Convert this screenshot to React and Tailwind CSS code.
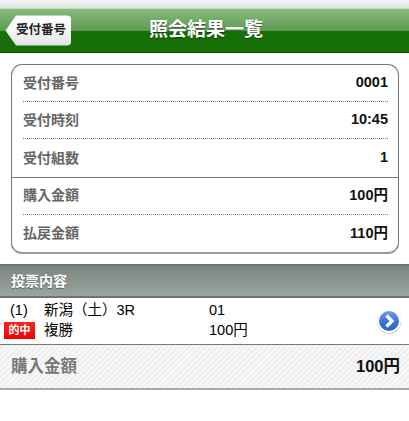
import React from 'react';

const font = { fontFamily: '"Liberation Sans", "Noto Sans CJK JP", sans-serif' };

const Row = ({ label, value, line }) => (
  <div className={`flex items-center justify-between h-[37.5px] ml-[11px] mr-[10px] ${line === 'dotted' ? 'border-b border-dotted border-[#777]' : ''}`}>
    <span className="text-[14px] font-bold text-[#666]">{label}</span>
    <span className="text-[14.5px] font-bold text-[#111]">{value}</span>
  </div>
);

const App = () => {
  return (
    <div className="w-[409px] h-[421px] bg-white overflow-hidden" style={font}>
      {/* Top strip */}
      <div className="h-[8px] bg-gradient-to-b from-[#f4f4f4] to-[#e2e2e2]" />

      {/* Header */}
      <div className="h-[45px] flex items-center border-t border-[#c4e0bc] border-b border-b-[#0f4f05] bg-[linear-gradient(#86bb7c_0%,#5f9a54_50%,#176f08_52%,#176f08_100%)] relative">
        <div className="ml-[5px] relative flex items-center h-[31px] w-[66px] pl-[11px]">
          <svg className="absolute left-0 top-0" width="66" height="31" viewBox="0 0 66 31">
            <defs>
              <linearGradient id="backBtn" x1="0" y1="0" x2="0" y2="1">
                <stop offset="0" stopColor="#ffffff" />
                <stop offset="0.5" stopColor="#f7f7f7" />
                <stop offset="1" stopColor="#dfe3e8" />
              </linearGradient>
            </defs>
            <path d="M0.5 15.5 L11 0.5 H62 Q66 0.5 66 4 V27 Q66 30.5 62 30.5 H11 Z" fill="url(#backBtn)" />
          </svg>
          <span className="relative text-[12.5px] font-bold text-[#222] whitespace-nowrap">受付番号</span>
        </div>
        <h1 className="ml-[78px] text-[19px] font-bold text-white [text-shadow:0_1px_1px_rgba(0,0,0,0.5)]">照会結果一覧</h1>
      </div>

      {/* Summary card */}
      <div className="mt-[11px] ml-[11px] mr-[10px] h-[190px] border border-[#777] border-b-2 border-b-[#999] rounded-[11px] flex flex-col">
        <Row label="受付番号" value="0001" line="dotted" />
        <Row label="受付時刻" value="10:45" line="dotted" />
        <div className="border-b border-[#777]">
          <Row label="受付組数" value="1" />
        </div>
        <Row label="購入金額" value="100円" line="dotted" />
        <Row label="払戻金額" value="110円" />
      </div>

      {/* Section header */}
      <div className="mt-[10px] h-[34px] flex items-center pl-[11px] border-t-2 border-t-[#6f7471] border-b-2 border-b-[#6f7471] bg-gradient-to-b from-[#7d8580] to-[#9ba5a0]">
        <span className="text-[14px] font-bold text-white [text-shadow:0_1px_1px_rgba(0,0,0,0.4)]">投票内容</span>
      </div>

      {/* Vote item */}
      <div className="h-[46px] flex items-center pb-[2px] relative">
        <div className="flex flex-col w-full text-[14.5px] text-black leading-[20px]">
          <div className="flex items-center">
            <span className="w-[44px] pl-[10px]">(1)</span>
            <span className="w-[165px]">新潟（土）3R</span>
            <span>01</span>
          </div>
          <div className="flex items-center">
            <span className="w-[44px] pl-[4px]">
              <span className="block w-[31px] h-[17px] bg-gradient-to-b from-[#ff2020] to-[#ee0000] text-white text-[11px] font-bold leading-[17px] text-center">的中</span>
            </span>
            <span className="w-[165px]">複勝</span>
            <span>100円</span>
          </div>
        </div>
        <svg className="absolute right-[7px] top-[10px]" width="26" height="26" viewBox="0 0 26 26">
          <defs>
            <linearGradient id="disc" x1="0" y1="0" x2="0" y2="1">
              <stop offset="0" stopColor="#6f9fe6" />
              <stop offset="0.5" stopColor="#3c78d8" />
              <stop offset="1" stopColor="#2a62c4" />
            </linearGradient>
          </defs>
          <circle cx="13" cy="13.6" r="12.2" fill="#bbb" />
          <circle cx="13" cy="13" r="12" fill="#fff" />
          <circle cx="13" cy="13" r="10" fill="url(#disc)" />
          <path d="M10.5 7.5 L16 13 L10.5 18.5" fill="none" stroke="#fff" strokeWidth="3.2" />
        </svg>
      </div>

      {/* Total */}
      <div className="h-[46px] flex items-center justify-between pl-[11px] pr-[9px] border-t border-t-[#777] border-b-2 border-b-[#aaa] bg-[repeating-linear-gradient(135deg,#f8f8f8_0px,#f8f8f8_2px,#efefef_2px,#efefef_4px)]">
        <span className="text-[16.5px] font-bold text-[#777]">購入金額</span>
        <span className="text-[16.5px] font-bold text-[#111]">100円</span>
      </div>
    </div>
  );
};

export default App;
